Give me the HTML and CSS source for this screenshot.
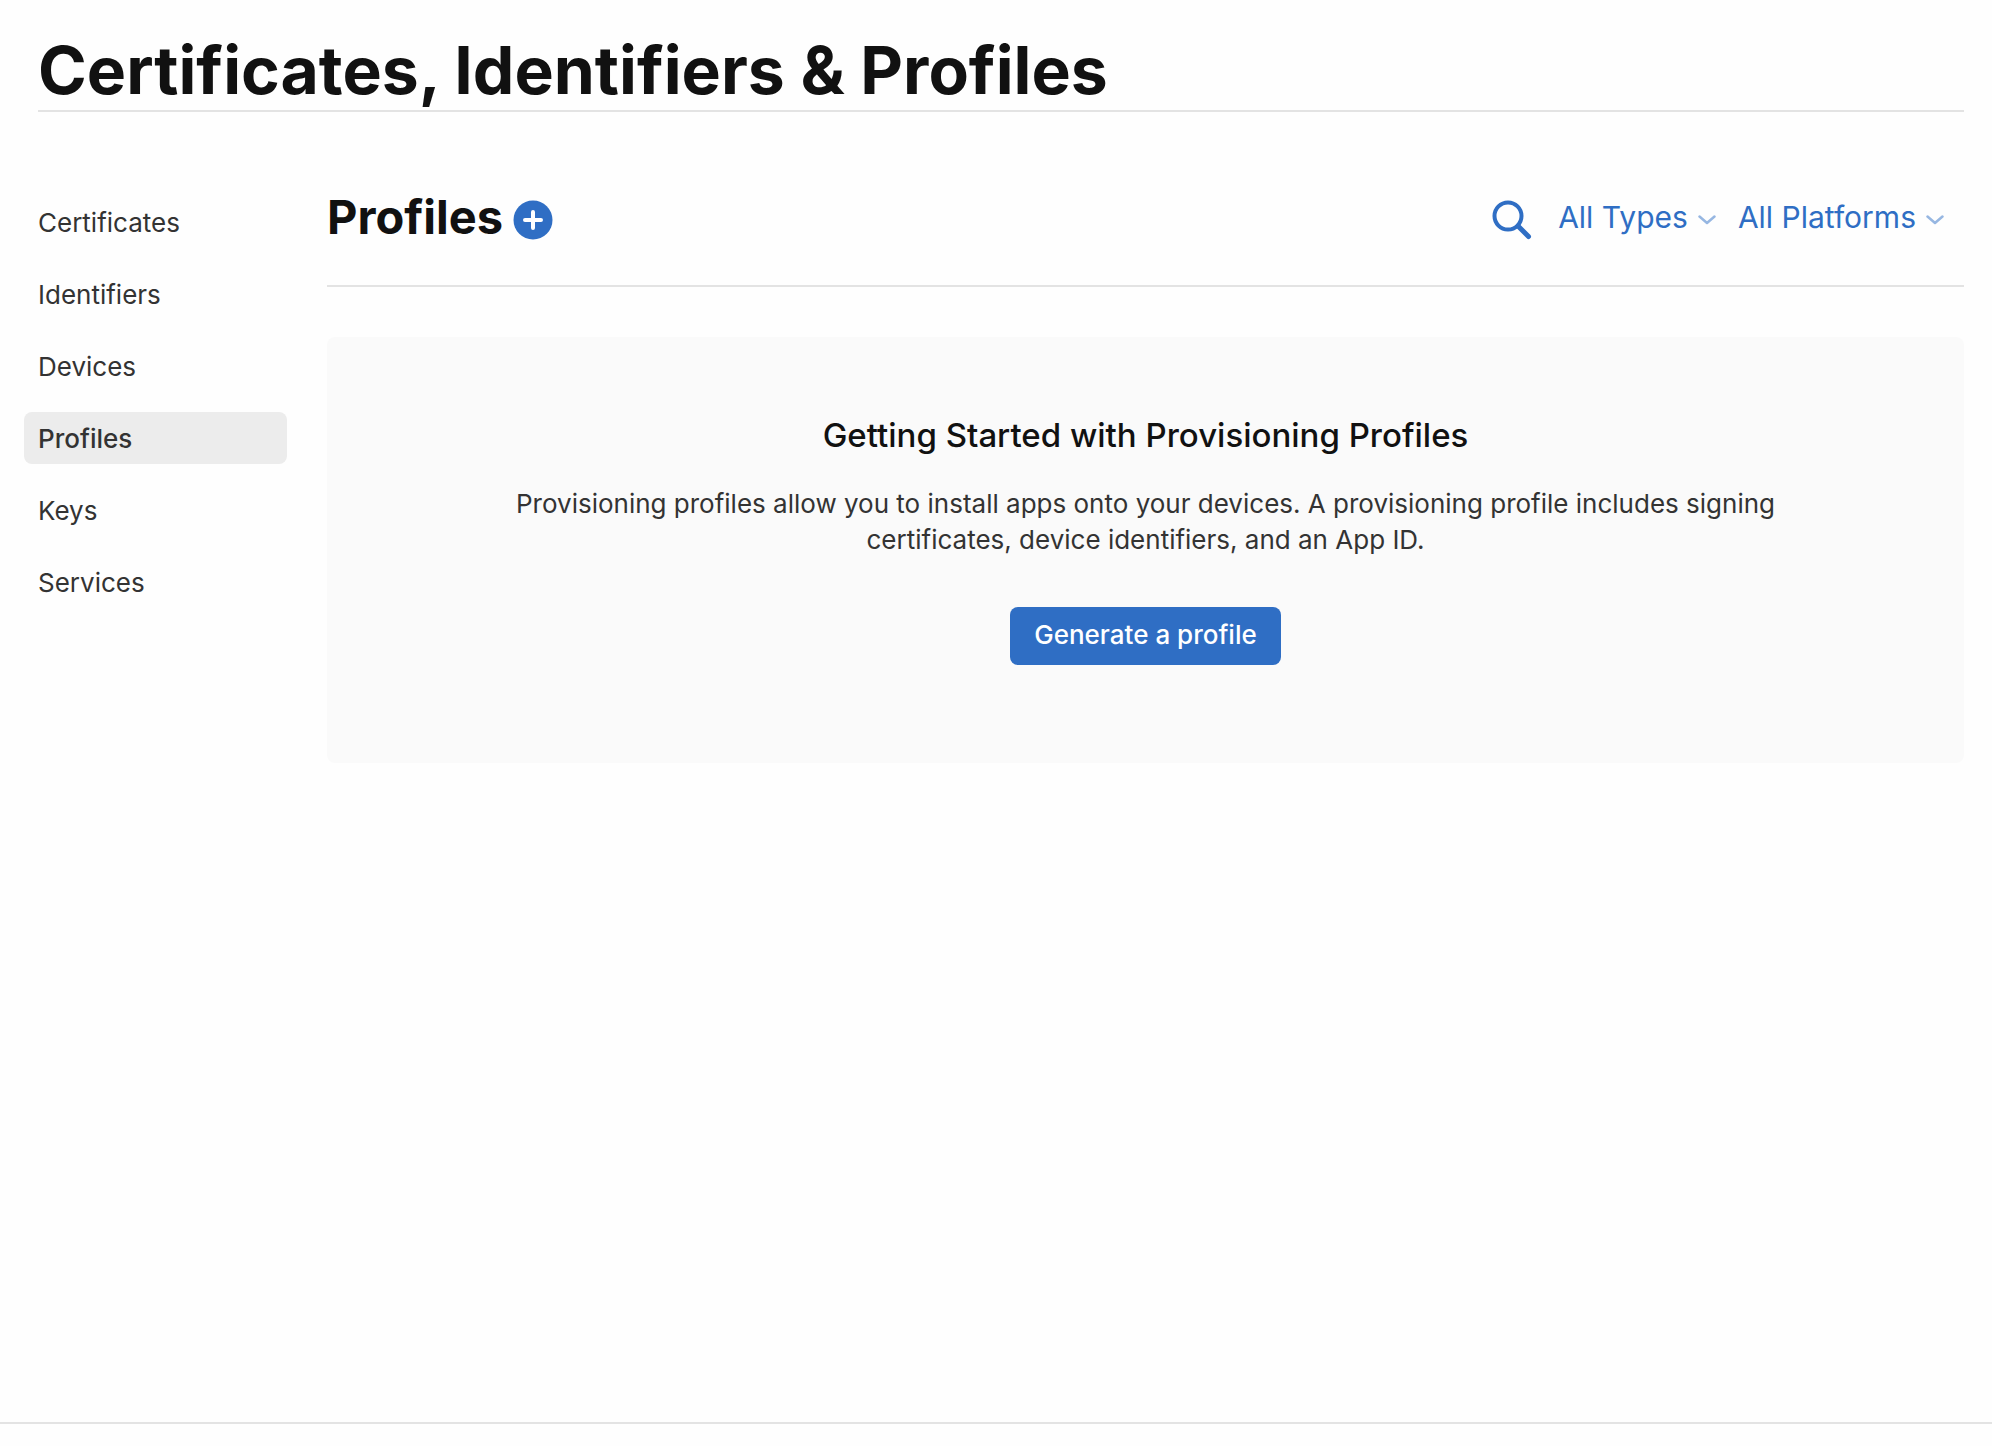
FILE: index.html
```html
<!DOCTYPE html>
<html lang="en">
<head>
    <meta charset="UTF-8">
    <meta name="viewport" content="width=device-width, initial-scale=1.0">
    <title>Certificates, Identifiers &amp; Profiles</title>
    <link rel="stylesheet" href="styles.css">
</head>
<body>
    <div class="page">
        <header class="page-header">
            <h1>Certificates, Identifiers &amp; Profiles</h1>
        </header>

        <div class="layout">
            <nav class="sidebar">
                <a href="#">Certificates</a>
                <a href="#">Identifiers</a>
                <a href="#">Devices</a>
                <a href="#" class="active">Profiles</a>
                <a href="#">Keys</a>
                <a href="#">Services</a>
            </nav>

            <main>
                <div class="toolbar">
                    <h2>Profiles</h2>
                    <button type="button" class="icon-button" aria-label="Add profile">
                        <svg width="40" height="40" viewBox="0 0 40 40">
                            <circle cx="20" cy="20" r="19.5" fill="#2f6ec4"/>
                            <path d="M20 12v16M12 20h16" stroke="#fff" stroke-width="4" stroke-linecap="round"/>
                        </svg>
                    </button>

                    <div class="filters">
                        <button type="button" class="icon-button search" aria-label="Search">
                            <svg width="40" height="40" viewBox="0 0 40 40" fill="none" stroke="#2f6ec4">
                                <circle cx="16" cy="16" r="13.5" stroke-width="4"/>
                                <path d="M26 26l10.5 10.5" stroke-width="5" stroke-linecap="round"/>
                            </svg>
                        </button>
                        <div class="filter">
                            <select aria-label="Type">
                                <option>All Types</option>
                            </select>
                            <svg width="18" height="10" viewBox="0 0 18 10" fill="none"><path d="M1.5 1.5L9 8l7.5-6.5" stroke="#97b7e2" stroke-width="2.5" stroke-linecap="round" stroke-linejoin="round"/></svg>
                        </div>
                        <div class="filter">
                            <select aria-label="Platform">
                                <option>All Platforms</option>
                            </select>
                            <svg width="18" height="10" viewBox="0 0 18 10" fill="none"><path d="M1.5 1.5L9 8l7.5-6.5" stroke="#97b7e2" stroke-width="2.5" stroke-linecap="round" stroke-linejoin="round"/></svg>
                        </div>
                    </div>
                </div>

                <section class="empty-state">
                    <h3>Getting Started with Provisioning Profiles</h3>
                    <p>Provisioning profiles allow you to install apps onto your devices. A provisioning profile includes signing certificates, device identifiers, and an App ID.</p>
                    <button type="button" class="primary">Generate a profile</button>
                </section>
            </main>
        </div>
    </div>
    <footer></footer>
</body>
</html>
```

FILE: styles.css
```css
* {
    box-sizing: border-box;
}
body {
    display: flex;
    flex-direction: column;
    min-height: 100vh;
    margin: 0;
    font-family: Inter, "Liberation Sans", sans-serif;
    font-size: 26px;
    line-height: 36px;
    color: #333;
    background: #fefefe;
}
h1, h2, h3, p {
    margin: 0;
}
h1, h2, h3 {
    color: #111;
}
button, select {
    font: inherit;
    border: 0;
    cursor: pointer;
}
.page {
    flex: 1;
    padding: 30px 28px 0 38px;
}
.page-header {
    border-bottom: 2px solid #e3e3e3;
}
h1 {
    font-size: 66px;
    line-height: 80px;
    font-weight: 700;
}
.layout {
    display: flex;
    gap: 40px;
    margin-top: 56px;
}

/* sidebar */
.sidebar {
    display: flex;
    flex-direction: column;
    flex: none;
    gap: 20px;
    width: 263px;
    margin-top: 28px;
    margin-left: -14px;
}
.sidebar a {
    padding: 9px 14px 7px;
    border-radius: 8px;
    color: #333;
    text-decoration: none;
}
.sidebar .active {
    background: #ececec;
    font-weight: 500;
}

/* title and filters */
main {
    flex: 1;
    min-width: 0;
}
.toolbar {
    display: flex;
    align-items: center;
    gap: 10px;
    height: 119px;
    padding-bottom: 14px;
    border-bottom: 2px solid #e3e3e3;
}
h2 {
    padding-bottom: 6px;
    font-size: 47px;
    line-height: 56px;
    font-weight: 700;
}
.icon-button {
    display: flex;
    padding: 0;
    background: none;
}
.filters {
    display: flex;
    align-items: center;
    gap: 22px;
    margin-left: auto;
    padding-right: 20px;
}
.search {
    margin-right: 4px;
}
.filter {
    display: flex;
    align-items: center;
    gap: 10px;
}
.filter select {
    appearance: none;
    field-sizing: content;
    padding: 0 0 6px;
    background: none;
    color: #2f6ec4;
    font-size: 30px;
    line-height: 40px;
}

/* empty state */
.empty-state {
    display: flex;
    flex-direction: column;
    align-items: center;
    margin-top: 50px;
    padding: 76px 180px 98px;
    border-radius: 8px;
    background: #fafafa;
    text-align: center;
}
h3 {
    font-size: 33px;
    line-height: 44px;
    font-weight: 500;
}
.empty-state p {
    max-width: 1280px;
    margin: 29px 0 49px;
}
.primary {
    padding: 10px 24px 12px;
    border-radius: 8px;
    background: #2f6ec4;
    color: #fff;
    font-weight: 500;
}
footer {
    height: 24px;
    border-top: 2px solid #e3e3e3;
}
```
